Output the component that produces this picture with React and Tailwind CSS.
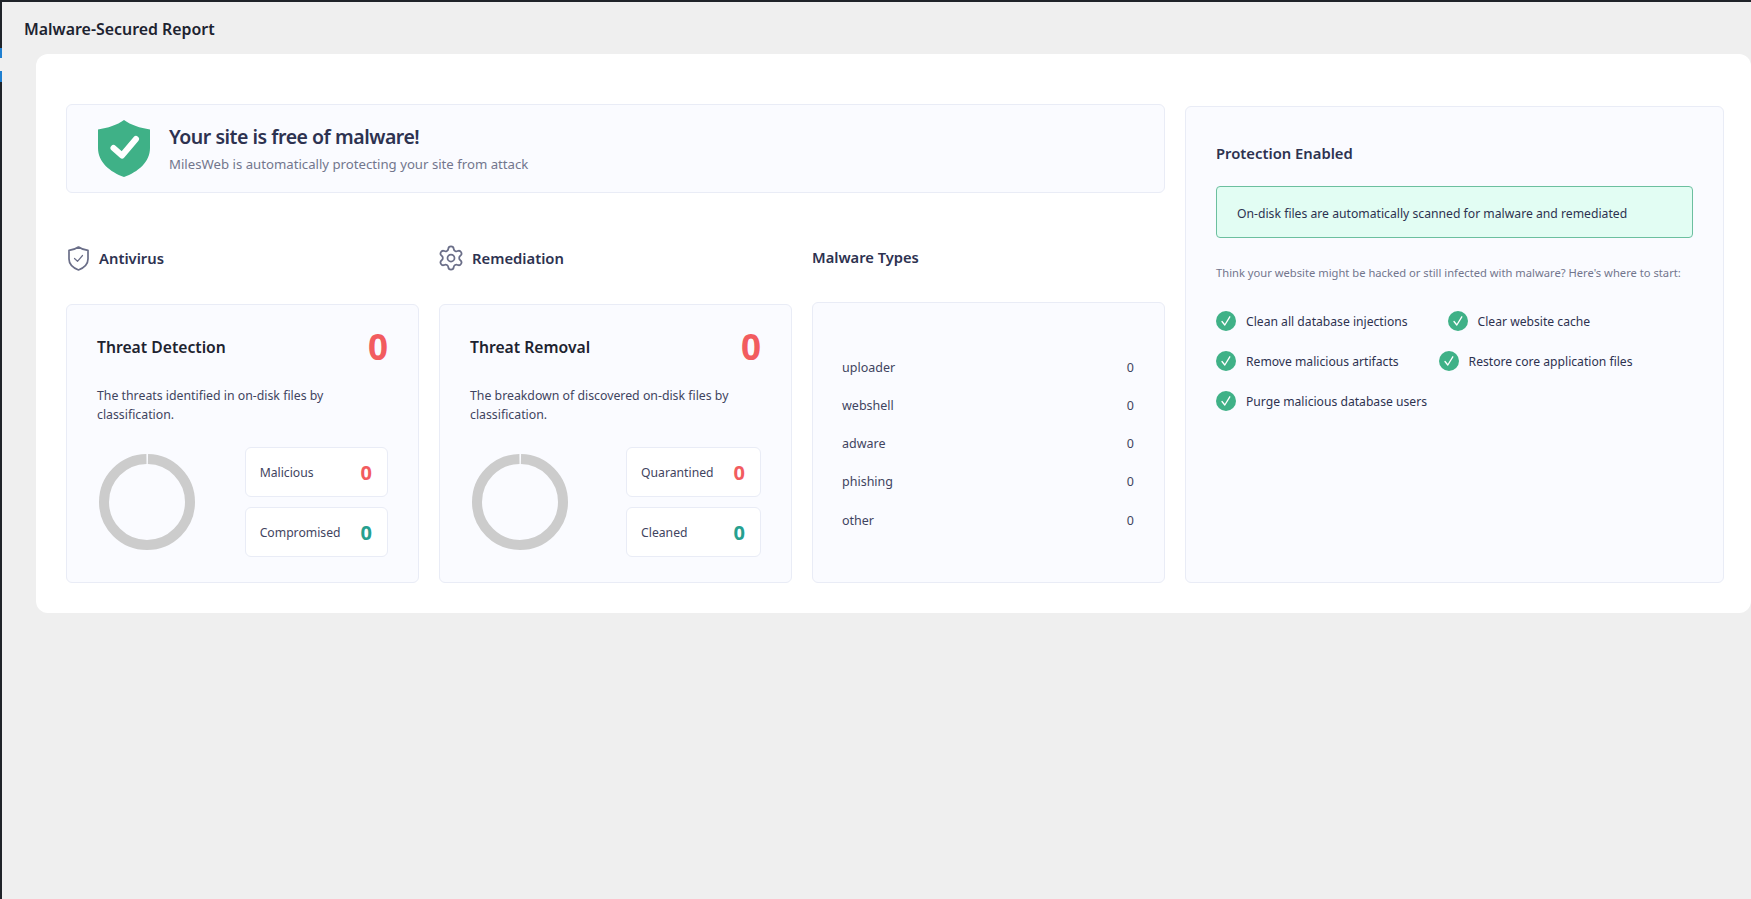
import React from 'react';
import { Settings } from 'lucide-react';

const font = "font-['Noto_Sans',sans-serif]";

function ShieldBadge() {
  return (
    <svg width="52" height="57" viewBox="0 0 52 57" className="shrink-0">
      <path d="M26 0C33 5 42 8 52 9.500V28C52 42 40 52 26 57C12 52 0 42 0 28V9.500C10 8 19 5 26 0Z" fill="#3fb187" />
      <path d="M15.500 28L24 35.500L38 19" fill="none" stroke="#fff" strokeWidth="6" strokeLinecap="round" strokeLinejoin="round" />
    </svg>
  );
}

function ShieldOutline() {
  return (
    <svg width="21" height="25" viewBox="0 0 21 25" className="shrink-0">
      <path d="M10.500 1C13 2.800 16 3.800 20 4.300V13C20 18.500 15.500 22 10.500 24C5.500 22 1 18.500 1 13V4.300C5 3.800 8 2.800 10.500 1Z" fill="none" stroke="#6a6e88" strokeWidth="1.700" strokeLinejoin="round" />
      <path d="M6.500 12.500L9.500 15.300L14.500 9.500" fill="none" stroke="#6a6e88" strokeWidth="1.200" strokeLinecap="round" strokeLinejoin="round" />
    </svg>
  );
}

function Donut() {
  return (
    <svg width="96" height="96" viewBox="0 0 96 96" className="ml-[2px] shrink-0">
      <circle cx="48" cy="48" r="43" fill="none" stroke="#cccccc" strokeWidth="10" strokeDasharray="268.180 2" strokeDashoffset="-1" transform="rotate(-90 48 48)" />
    </svg>
  );
}

function CheckDot() {
  return (
    <svg width="20" height="20" viewBox="0 0 20 20" className="shrink-0">
      <circle cx="10" cy="10" r="10" fill="#3fb187" />
      <path d="M6 10.500L8.800 14L13.800 5.800" fill="none" stroke="#fff" strokeWidth="1.300" strokeLinecap="round" strokeLinejoin="round" />
    </svg>
  );
}

function StatBox({ label, value, color }) {
  return (
    <div className="flex h-[50px] items-center justify-between rounded-md border border-[#e9ecf6] bg-white pl-[14px] pr-[15px] pt-[2px]">
      <span className="text-[12.200px] text-[#3f4460]">{label}</span>
      <span className={`ml-5 text-[20px] font-bold ${color}`}>{value}</span>
    </div>
  );
}

function ThreatCard({ title, desc, stats }) {
  return (
    <div className="flex-1 rounded-md border border-[#e9ecf6] bg-[#fafbff] px-[30px] pt-[26px]">
      <div className="flex h-8 items-center justify-between">
        <h3 className="pt-[2px] text-[15.700px] font-semibold text-[#1d2330]">{title}</h3>
        <span className="text-[35px] font-bold text-[#f25c5f]">0</span>
      </div>
      <p className="mt-[23px] text-[12.300px] leading-[19px] text-[#3f4460]">{desc}</p>
      <div className="mt-[23px] flex items-center justify-between">
        <Donut />
        <div className="flex flex-col gap-[10px]">
          {stats.map((s) => (
            <StatBox key={s.label} {...s} />
          ))}
        </div>
      </div>
    </div>
  );
}

const malwareTypes = ['uploader', 'webshell', 'adware', 'phishing', 'other'];
const steps = [
  'Clean all database injections',
  'Clear website cache',
  'Remove malicious artifacts',
  'Restore core application files',
  'Purge malicious database users',
];

export default function App() {
  return (
    <div className={`flex h-screen w-full flex-col overflow-hidden bg-[#efefef] ${font}`}>
      <div className="h-[2px] shrink-0 bg-[#1f2329]" />
      <div className="flex min-h-0 flex-1">
        <div className="flex w-[2px] shrink-0 flex-col bg-[#1f2329]">
          <div className="mt-[46px] h-[10px] bg-[#1f7fd0]" />
          <div className="h-[13px] bg-[#efefef]" />
          <div className="h-[11px] bg-[#1f7fd0]" />
        </div>
        <div className="min-w-0 flex-1">
          <div className="flex h-[52px] items-center pl-[22px] pt-1">
            <h1 className="text-[15.900px] font-semibold text-[#1d2330]">Malware-Secured Report</h1>
          </div>
          <div className="ml-[34px] flex h-[559px] gap-5 rounded-xl bg-white pb-[30px] pl-[30px] pr-[27px] pt-[50px]">
            <div className="flex w-[1099px] shrink-0 flex-col">
              <div className="flex h-[89px] items-center rounded-md border border-[#e9ecf6] bg-[#fafbff] pl-[31px]">
                <ShieldBadge />
                <div className="ml-[19px]">
                  <h2 className="text-[19.500px] font-semibold leading-[26px] tracking-[-0.480px] text-[#2d3250]">Your site is free of malware!</h2>
                  <p className="mt-1 text-[13.200px] leading-5 text-[#72768d]">MilesWeb is automatically protecting your site from attack</p>
                </div>
              </div>
              <div className="mt-[52px] flex min-h-0 flex-1 gap-5">
                <div className="flex w-[353px] flex-col">
                  <div className="flex h-[26px] items-center">
                    <div className="ml-[2px]"><ShieldOutline /></div>
                    <span className="ml-[10px] text-[14.800px] font-semibold text-[#2d3250]">Antivirus</span>
                  </div>
                  <div className="mt-[33px] flex flex-1">
                    <ThreatCard
                      title="Threat Detection"
                      desc="The threats identified in on-disk files by classification."
                      stats={[
                        { label: 'Malicious', value: 0, color: 'text-[#f25c5f]' },
                        { label: 'Compromised', value: 0, color: 'text-[#26a08f]' },
                      ]}
                    />
                  </div>
                </div>
                <div className="flex w-[353px] flex-col">
                  <div className="flex h-[26px] items-center">
                    <Settings size={28} strokeWidth={1.500} className="-ml-[2px] shrink-0 text-[#6a6e88]" />
                    <span className="ml-[7px] text-[14.800px] font-semibold text-[#2d3250]">Remediation</span>
                  </div>
                  <div className="mt-[33px] flex flex-1">
                    <ThreatCard
                      title="Threat Removal"
                      desc="The breakdown of discovered on-disk files by classification."
                      stats={[
                        { label: 'Quarantined', value: 0, color: 'text-[#f25c5f]' },
                        { label: 'Cleaned', value: 0, color: 'text-[#26a08f]' },
                      ]}
                    />
                  </div>
                </div>
                <div className="flex w-[353px] flex-col">
                  <div className="-mt-px flex h-[26px] items-center">
                    <span className="text-[14.700px] font-semibold text-[#2d3250]">Malware Types</span>
                  </div>
                  <div className="mt-[32px] flex-1 rounded-md border border-[#e9ecf6] bg-[#fafbff] pl-[29px] pr-[30px] pt-[46px]">
                    {malwareTypes.map((t) => (
                      <div key={t} className="flex h-[38px] items-center justify-between text-[12.500px] text-[#3f4460] last:pt-[2px]">
                        <span>{t}</span>
                        <span>0</span>
                      </div>
                    ))}
                  </div>
                </div>
              </div>
            </div>
            <div className="mt-[2px] flex-1 rounded-md border border-[#e9ecf6] bg-[#fafbff] px-[30px] pt-[33px]">
              <h3 className="text-[14.800px] font-semibold leading-[26px] text-[#2d3250]">Protection Enabled</h3>
              <div className="mt-5 flex h-[52px] items-center rounded-[4px] border border-[#6cbf9f] bg-[#e2fdf3] pl-5 pt-1 text-[12.200px] text-[#2d3250]">
                On-disk files are automatically scanned for malware and remediated
              </div>
              <p className="mt-[26px] text-[11.200px] leading-[18px] text-[#72768d]">
                Think your website might be hacked or still infected with malware? Here's where to start:
              </p>
              <div className="mt-[29px] flex flex-wrap gap-y-5">
                {steps.map((s) => (
                  <div key={s} className="mr-10 flex h-5 items-center">
                    <CheckDot />
                    <span className="ml-[10px] pt-[2px] text-[12.150px] text-[#2d3250]">{s}</span>
                  </div>
                ))}
              </div>
            </div>
          </div>
        </div>
      </div>
    </div>
  );
}
